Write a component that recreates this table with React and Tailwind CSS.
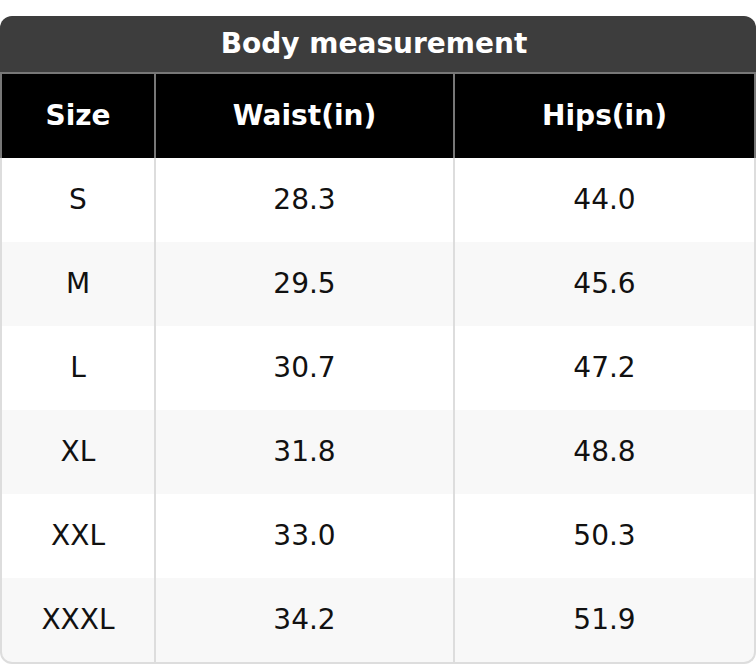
import React from 'react'

const rows = [
  ['S', '28.3', '44.0'],
  ['M', '29.5', '45.6'],
  ['L', '30.7', '47.2'],
  ['XL', '31.8', '48.8'],
  ['XXL', '33.0', '50.3'],
  ['XXXL', '34.2', '51.9'],
]

const headers = ['Size', 'Waist(in)', 'Hips(in)']

export default function App() {
  return (
    <div className="min-h-screen bg-white pt-4 font-['DejaVu_Sans',sans-serif]">
      <div className="w-[756px] overflow-hidden rounded-t-xl">
        {/* Titel */}
        <div className="flex h-[58px] items-center justify-center border-b-2 border-[#777] bg-[#3d3d3d] pr-2 text-[28px] font-bold text-white">
          Body measurement
        </div>

        {/* Kopfzeile */}
        <div className="grid grid-cols-[156px_299px_301px] bg-black">
          {headers.map((h, i) => (
            <div
              key={h}
              className={`flex h-[84px] items-center justify-center border-r-2 border-[#777] text-[28px] font-bold text-white ${i === 0 ? 'border-l-2' : ''}`}
            >
              {h}
            </div>
          ))}
        </div>
      </div>

      {/* Datenzeilen */}
      <div className="w-[756px]">
        {rows.map((row, r) => {
          const last = r === rows.length - 1
          return (
            <div key={row[0]} className="grid grid-cols-[156px_299px_301px]">
              {row.map((cell, i) => (
                <div
                  key={i}
                  className={`flex h-[84px] items-center justify-center border-r-2 border-[#ddd] text-[28px] text-[#111] ${
                    r % 2 === 1 ? 'bg-[#f8f8f8]' : 'bg-white'
                  } ${i === 0 ? 'border-l-2' : ''} ${last ? 'h-[86px] border-b-2' : ''} ${
                    last && i === 0 ? 'rounded-bl-xl' : ''
                  } ${last && i === 2 ? 'rounded-br-xl' : ''}`}
                >
                  {cell}
                </div>
              ))}
            </div>
          )
        })}
      </div>
    </div>
  )
}
